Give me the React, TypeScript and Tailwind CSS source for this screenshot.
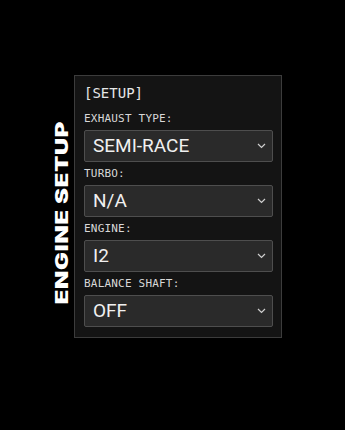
const fields = [
  { label: 'EXHAUST TYPE:', value: 'SEMI-RACE' },
  { label: 'TURBO:', value: 'N/A' },
  { label: 'ENGINE:', value: 'I2' },
  { label: 'BALANCE SHAFT:', value: 'OFF' },
];

function Chevron() {
  return (
    <svg width="9" height="6" viewBox="0 0 9 6" fill="none" className="shrink-0">
      <path d="M1 1l3.5 3.5L8 1" stroke="#cfcfcf" strokeWidth="1.2" />
    </svg>
  );
}

export default function App() {
  return (
    <div className="h-[430px] w-[345px] bg-black">
      <div className="flex items-center pl-[55px] pt-[75px]">
        <div
          className="[writing-mode:vertical-rl] rotate-180 scale-y-[1.4] text-white font-black text-[17px] leading-[15px] tracking-[0.5px] mr-[4px] mt-[12px]"
          style={{ fontFamily: 'Inter, "Liberation Sans", sans-serif' }}
        >
          ENGINE SETUP
        </div>
        <div className="w-[208px] border border-[#3c3c3c] bg-[#141414] pl-[9px] pr-[8px] pt-[7px] pb-[10px]">
          <div
            className="text-[14px] leading-[20px] text-[#e6e6e6] mb-[8px]"
            style={{ fontFamily: '"DejaVu Sans Mono", monospace' }}
          >
            [SETUP]
          </div>
          {fields.map((f, i) => (
            <div key={f.label} className={i > 0 ? 'mt-[4px]' : ''}>
              <div
                className="text-[11px] leading-[16px] text-[#d8d8d8] mb-[3px] tracking-[0.2px]"
                style={{ fontFamily: '"DejaVu Sans Mono", monospace' }}
              >
                {f.label}
              </div>
              <div className="h-[32px] flex items-center justify-between rounded-[2px] border border-[#4e4e4e] bg-[#2a2a2a] pl-[8px] pr-[6px]">
                <span
                  className="text-[19px] text-[#f0f0f0]"
                  style={{ fontFamily: 'Roboto, "Liberation Sans", sans-serif' }}
                >
                  {f.value}
                </span>
                <Chevron />
              </div>
            </div>
          ))}
        </div>
      </div>
    </div>
  );
}
